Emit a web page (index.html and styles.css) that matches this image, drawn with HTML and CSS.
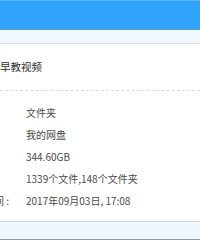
FILE: index.html
```html
<!DOCTYPE html>
<html lang="zh-CN">
<head>
<meta charset="utf-8">
<link rel="stylesheet" href="styles.css">
</head>
<body>
<div class="app">
  <div class="titlebar"></div>
  <div class="toolbar"></div>
  <div class="content">
    <div class="name">早教视频</div>
    <div class="props">
      <div class="row"><span class="label"></span><span class="value">文件夹</span></div>
      <div class="row"><span class="label"></span><span class="value">我的网盘</span></div>
      <div class="row"><span class="label"></span><span class="value">344.60GB</span></div>
      <div class="row"><span class="label"></span><span class="value">1339个文件,148个文件夹</span></div>
      <div class="row"><span class="label">修改时间 :</span><span class="value">2017年09月03日, 17:08</span></div>
    </div>
  </div>
  <div class="footer"></div>
</div>
</body>
</html>
```
FILE: styles.css
```css
html, body {
  margin: 0;
  padding: 0;
  background: #ffffff;
}
.app {
  width: 200px;
  height: 240px;
  overflow: hidden;
  display: flex;
  flex-direction: column;
  font-family: "Noto Sans CJK SC", "Noto Sans", sans-serif;
}
.titlebar {
  height: 28px;
  background: #30a4fb;
  border-top: 1px solid #5cb6f6;
  border-bottom: 1px solid #5a9ed2;
  flex: none;
}
.toolbar {
  height: 13px;
  background: #f1f9fd;
  border-bottom: 1px solid #d3dbe0;
  flex: none;
}
.content {
  flex: 1;
  display: flex;
  flex-direction: column;
}
.name {
  height: 47px;
  display: flex;
  align-items: center;
  font-size: 10.5px;
  color: #2e2e2e;
  border-bottom: 1px dashed #dcdcdc;
  padding-bottom: 1px;
  box-sizing: border-box;
}
.props {
  display: flex;
  flex-direction: column;
  padding-top: 10px;
  margin-left: -36px;
}
.row {
  height: 22px;
  display: flex;
  align-items: center;
  font-size: 10px;
  color: #4a4a4a;
  white-space: nowrap;
}
.label {
  width: 62px;
  flex: none;
}
.footer {
  height: 17px;
  background: #eef6fc;
  border-top: 1px solid #c9dff0;
  border-bottom: 1px solid #9a9a9a;
  flex: none;
}
```
